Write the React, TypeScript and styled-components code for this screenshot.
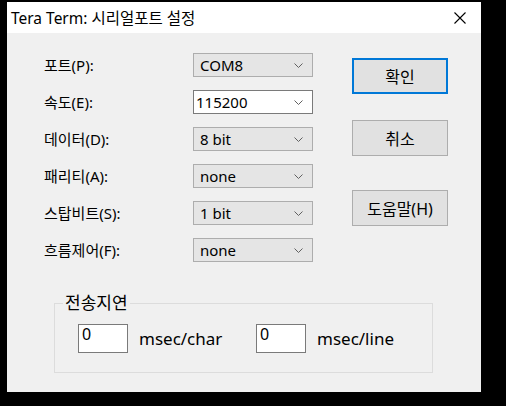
import React from 'react'
import styled, {createGlobalStyle} from 'styled-components'

const GlobalStyle = createGlobalStyle`
    html, body {
        margin: 0;
        padding: 0;
        background: #000000;
    }
    body {
        width: 506px;
        height: 406px;
        overflow: hidden;
        font-family: "Noto Sans", "Noto Sans CJK KR", sans-serif;
        color: #000000;
    }
`

const Screen = styled.div`
    width: 506px;
    height: 406px;
    box-sizing: border-box;
    padding: 2px 25px 14px 7px;
    background: #000000;
`

const Dialog = styled.div`
    width: 474px;
    height: 390px;
    background: #f0f0f0;
    display: flex;
    flex-direction: column;
`

const TitleBar = styled.div`
    height: 31px;
    flex-shrink: 0;
    background: #ffffff;
    display: flex;
    align-items: center;
    justify-content: space-between;
    padding-left: 4px;
`

const TitleText = styled.span`
    font-size: 15.5px;
    line-height: 20px;
`

const CloseButton = styled.div`
    width: 42px;
    height: 31px;
    display: flex;
    align-items: center;
    justify-content: center;
`

const Body = styled.div`
    padding: 20px 0 0 37px;
    display: flex;
    flex-direction: column;
`

const TopArea = styled.div`
    display: flex;
    align-items: flex-start;
`

const Form = styled.div`
    display: grid;
    grid-template-columns: 149px 120px;
    row-gap: 13px;
`

const Label = styled.div`
    height: 24px;
    line-height: 24px;
    font-size: 15px;
    white-space: nowrap;
`

const Combo = styled.div<{ $editable?: boolean }>`
    height: 24px;
    box-sizing: border-box;
    border: 1px solid ${({$editable}) => ($editable ? '#7a7a7a' : '#adadad')};
    background: ${({$editable}) => ($editable ? '#ffffff' : '#e5e5e5')};
    display: flex;
    align-items: center;
    justify-content: space-between;
    padding: 0 9px 0 ${({$editable}) => ($editable ? '2px' : '6px')};
    font-size: 15px;
    line-height: 20px;
`

const ButtonColumn = styled.div`
    margin: 5px 0 0 39px;
    display: flex;
    flex-direction: column;
`

const DialogButton = styled.div<{ $focused?: boolean; $gap?: number }>`
    width: 96px;
    height: 36px;
    box-sizing: border-box;
    margin-top: ${({$gap}) => $gap || 0}px;
    border: ${({$focused}) => ($focused ? '2px solid #0078d7' : '1px solid #adadad')};
    background: #e1e1e1;
    display: flex;
    align-items: center;
    justify-content: center;
    font-size: 16px;
`

const GroupBox = styled.fieldset`
    margin: 31px 0 0 10px;
    width: 379px;
    height: 80px;
    box-sizing: border-box;
    border: 1px solid #dcdcdc;
    padding: 11px 0 0 23px;
    font-size: 17px;
`

const GroupTitle = styled.legend`
    margin-left: -15px;
    padding: 0 2px;
    line-height: 20px;
`

const DelayRow = styled.div`
    display: grid;
    grid-template-columns: 50px 128px 50px auto;
    align-items: center;
`

const DelayInput = styled.div`
    height: 29px;
    box-sizing: border-box;
    border: 1px solid #7a7a7a;
    background: #ffffff;
    padding: 0 3px;
    font-size: 16px;
    line-height: 19px;
    align-self: stretch;
`

const Unit = styled.span`
    padding-left: 11px;
    line-height: 22px;
`

const Chevron = () => (
    <svg width="9" height="5" viewBox="0 0 9 5">
        <polyline points="0.5,0.5 4.5,4.5 8.5,0.5" fill="none" stroke="#606060" strokeWidth="1"/>
    </svg>
)

const CloseIcon = () => (
    <svg width="12" height="12" viewBox="0 0 12 12">
        <path d="M0.5 0.5 L11.5 11.5 M11.5 0.5 L0.5 11.5" stroke="#000000" strokeWidth="1.1" fill="none"/>
    </svg>
)

const fields = [
    {label: '포트(P):', value: 'COM8'},
    {label: '속도(E):', value: '115200', editable: true},
    {label: '데이터(D):', value: '8 bit'},
    {label: '패리티(A):', value: 'none'},
    {label: '스탑비트(S):', value: '1 bit'},
    {label: '흐름제어(F):', value: 'none'},
]

const App: React.FC = () => (
    <>
        <GlobalStyle/>
        <Screen>
            <Dialog>
                <TitleBar>
                    <TitleText>Tera Term: 시리얼포트 설정</TitleText>
                    <CloseButton>
                        <CloseIcon/>
                    </CloseButton>
                </TitleBar>
                <Body>
                    <TopArea>
                        <Form>
                            {fields.map((f) => (
                                <React.Fragment key={f.label}>
                                    <Label>{f.label}</Label>
                                    <Combo $editable={f.editable}>
                                        <span>{f.value}</span>
                                        <Chevron/>
                                    </Combo>
                                </React.Fragment>
                            ))}
                        </Form>
                        <ButtonColumn>
                            <DialogButton $focused>확인</DialogButton>
                            <DialogButton $gap={26}>취소</DialogButton>
                            <DialogButton $gap={34}>도움말(H)</DialogButton>
                        </ButtonColumn>
                    </TopArea>
                    <GroupBox>
                        <GroupTitle>전송지연</GroupTitle>
                        <DelayRow>
                            <DelayInput>0</DelayInput>
                            <Unit>msec/char</Unit>
                            <DelayInput>0</DelayInput>
                            <Unit>msec/line</Unit>
                        </DelayRow>
                    </GroupBox>
                </Body>
            </Dialog>
        </Screen>
    </>
)

export default App
